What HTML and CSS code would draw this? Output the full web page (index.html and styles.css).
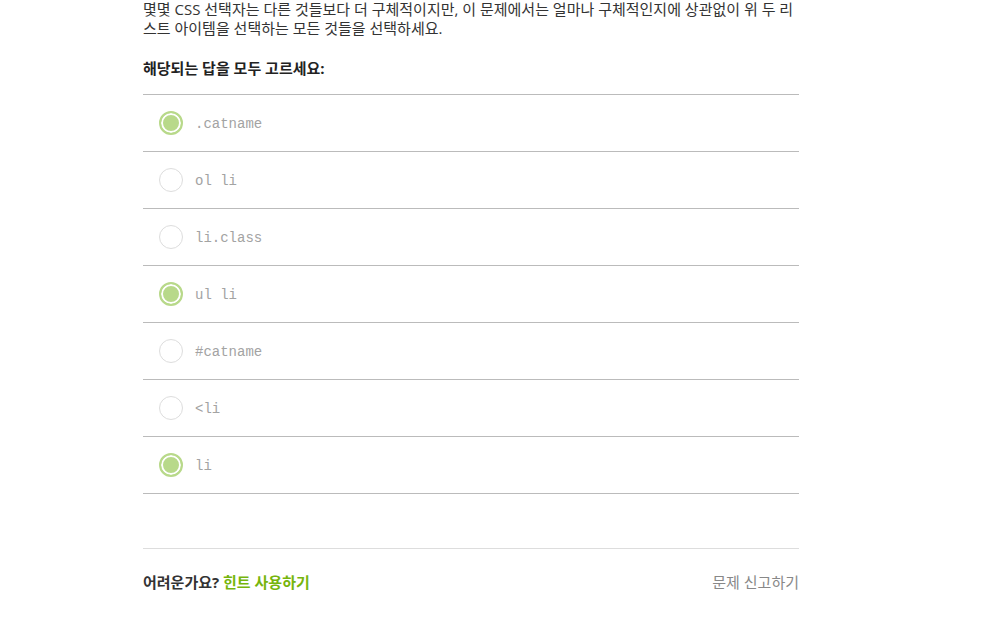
FILE: index.html
```html
<!DOCTYPE html>
<html lang="ko">
<head>
<meta charset="utf-8">
<link rel="stylesheet" href="styles.css">
</head>
<body>
<div class="quiz">
  <p class="question">몇몇 CSS 선택자는 다른 것들보다 더 구체적이지만, 이 문제에서는 얼마나 구체적인지에 상관없이 위 두 리스트 아이템을 선택하는 모든 것들을 선택하세요.</p>
  <p class="prompt">해당되는 답을 모두 고르세요:</p>
  <ul class="options">
    <li class="option selected"><span class="radio"></span><span class="code">.catname</span></li>
    <li class="option"><span class="radio"></span><span class="code">ol li</span></li>
    <li class="option"><span class="radio"></span><span class="code">li.class</span></li>
    <li class="option selected"><span class="radio"></span><span class="code">ul li</span></li>
    <li class="option"><span class="radio"></span><span class="code">#catname</span></li>
    <li class="option"><span class="radio"></span><span class="code">&lt;li</span></li>
    <li class="option selected"><span class="radio"></span><span class="code">li</span></li>
  </ul>
  <div class="footer">
    <div class="hint">어려운가요? <a class="hint-link">힌트 사용하기</a></div>
    <a class="report">문제 신고하기</a>
  </div>
</div>
</body>
</html>
```
FILE: styles.css
```css
html, body {
  margin: 0;
  padding: 0;
  background: #fff;
}
body {
  font-family: "Open Sans", "Noto Sans CJK KR", sans-serif;
  font-size: 15px;
  color: #333;
}
.quiz {
  width: 656px;
  margin-left: 143px;
}
.question {
  margin: 0;
  line-height: 19px;
  color: #333;
}
.prompt {
  margin: 20px 0 0 0;
  line-height: 20px;
  font-weight: bold;
  color: #222;
}
.options {
  list-style: none;
  margin: 16px 0 0 0;
  padding: 0;
  border-top: 1px solid #bbb;
}
.option {
  height: 56px;
  border-bottom: 1px solid #bbb;
  display: flex;
  align-items: center;
  padding-left: 16px;
}
.radio {
  width: 24px;
  height: 24px;
  box-sizing: border-box;
  border-radius: 50%;
  border: 1px solid #ddd;
  margin-right: 12px;
  flex: none;
}
.option.selected .radio {
  border: 2px solid #b8d98a;
  background: #b8d98a;
  box-shadow: inset 0 0 0 2px #fff;
}
.code {
  font-family: "Liberation Mono", monospace;
  font-size: 14px;
  color: #a3a3a3;
  padding-top: 2px;
}
.footer {
  margin-top: 54px;
  border-top: 1px solid #ddd;
  display: flex;
  justify-content: space-between;
  align-items: center;
  padding-top: 23px;
  line-height: 20px;
}
.hint {
  font-weight: bold;
  color: #333;
}
.hint-link {
  color: #76b50c;
}
.report {
  color: #888;
}
```
